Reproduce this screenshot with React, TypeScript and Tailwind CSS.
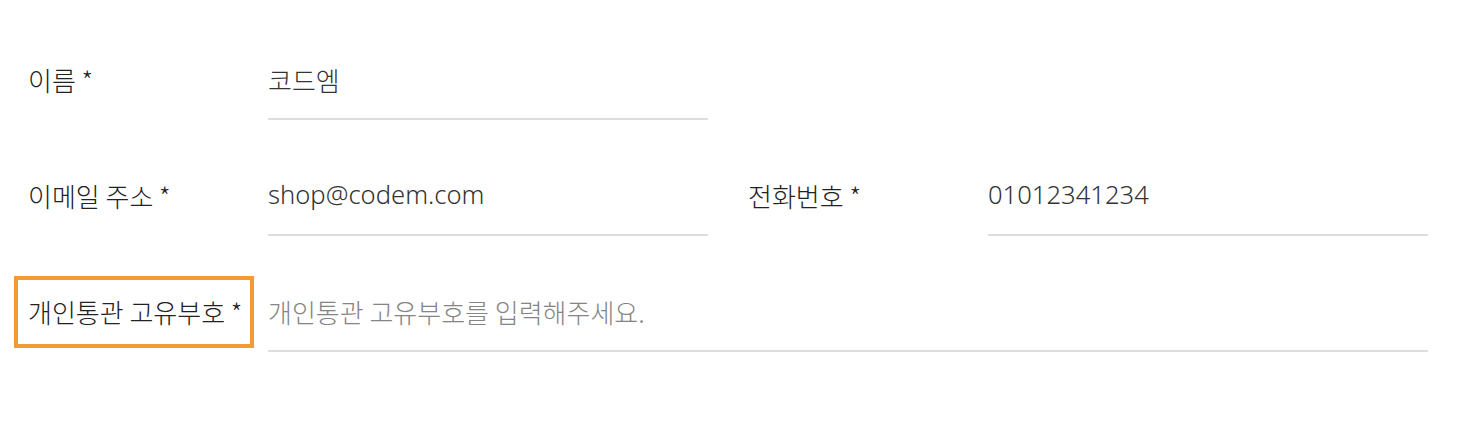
import React from "react";

const hangul = "font-['Noto_Sans_CJK_KR','Noto_Sans',sans-serif] text-[26px] font-light";
const latin = "font-['Noto_Sans','Noto_Sans_CJK_KR',sans-serif] text-[25.6px] font-light";

function Label({ text, highlight }: { text: string; highlight?: boolean }) {
  return (
    <div className="relative flex h-[72px] w-[240px] shrink-0 items-center pl-[14px] pb-[10px]">
      <span className={`${hangul} text-[#222222]`}>{text}</span>
      {highlight && (
        <div className="pointer-events-none absolute left-0 right-0 top-[-4px] bottom-[4px] border-[4px] border-[#f29a36]" />
      )}
    </div>
  );
}

function Field({
  value,
  placeholder,
  width,
  isLatin,
}: {
  value?: string;
  placeholder?: string;
  width: string;
  isLatin?: boolean;
}) {
  return (
    <div className={`ml-[14px] flex h-[72px] shrink-0 items-center border-b-2 border-[#dddddd] pb-[8px] ${width}`}>
      {value ? (
        <span className={`${isLatin ? latin : hangul} text-[#333333]`}>{value}</span>
      ) : (
        <span className={`${hangul} text-[#858585]`}>{placeholder}</span>
      )}
    </div>
  );
}

export default function App() {
  return (
    <div className="h-[432px] w-[1458px] bg-white pl-[14px] pt-[48px]">
      <div className="flex flex-col gap-[44px]">
        <div className="flex">
          <Label text="이름 *" />
          <Field value="코드엠" width="w-[440px]" />
        </div>
        <div className="flex">
          <Label text="이메일 주소 *" />
          <Field value="shop@codem.com" width="w-[440px]" isLatin />
          <div className="ml-[26px] flex">
            <Label text="전화번호 *" />
            <Field value="01012341234" width="w-[440px]" isLatin />
          </div>
        </div>
        <div className="flex">
          <Label text="개인통관 고유부호 *" highlight />
          <Field placeholder="개인통관 고유부호를 입력해주세요." width="w-[1160px]" />
        </div>
      </div>
    </div>
  );
}
